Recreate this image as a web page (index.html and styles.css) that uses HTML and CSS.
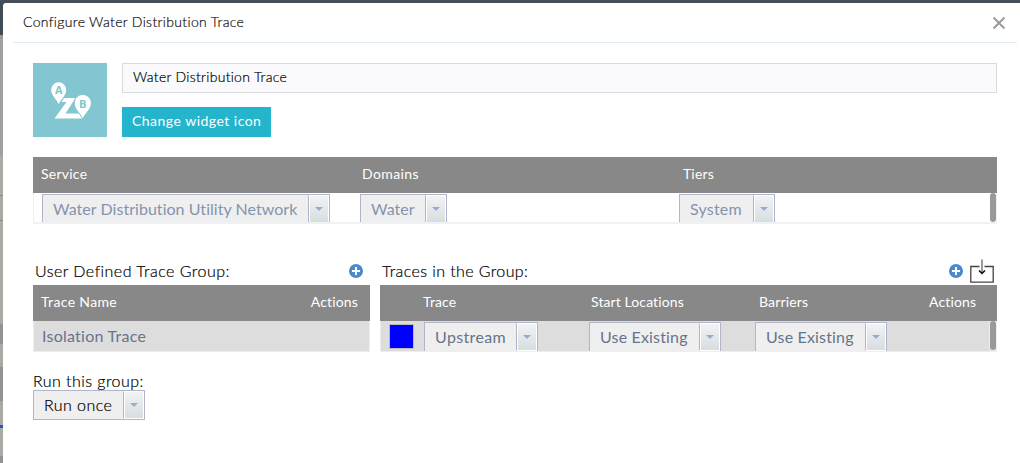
FILE: index.html
```html
<!DOCTYPE html>
<html lang="en">
<head>
<meta charset="utf-8">
<title>Configure Water Distribution Trace</title>
<link rel="stylesheet" href="styles.css">
</head>
<body>
<div class="map-strip"></div>
<main class="dialog">
  <header class="title-bar">
    <h1 class="title"><span class="t-title">Configure Water Distribution Trace</span></h1>
    <svg class="close" width="14" height="14" viewBox="0 0 14 14"><path d="M1.500 1.500 12.500 12.500M12.500 1.500 1.500 12.500" fill="none" stroke="#999" stroke-width="1.900"/></svg>
  </header>
  <div class="content">
    <section class="identity">
      <div class="widget-icon">
        <svg width="74" height="74" viewBox="0 0 74 74">
          <path d="M31 35H42.500L32.500 50.500H46L50 55.500H21.500L33.500 39H28.500Z" fill="#fff"/>
          <path d="M25.700 41C23 35.500 18.200 32.500 18.200 26.700A7.500 7.500 0 0 1 33.200 26.700C33.200 32.500 28.400 35.500 25.700 41Z" fill="#fff"/>
          <path d="M49.800 56.300C47 49.500 41.200 46.500 41.200 40A8.600 8.600 0 0 1 58.400 40C58.400 46.500 52.600 49.500 49.800 56.300Z" fill="#fff" stroke="#81c6d0" stroke-width="1"/>
          <text x="25.700" y="31" class="pin-letter">A</text>
          <text x="49.800" y="44.500" class="pin-letter">B</text>
        </svg>
      </div>
      <div class="identity-fields">
        <div class="name-input"><span class="t-name">Water Distribution Trace</span></div>
        <div class="icon-button"><span class="t-button">Change widget icon</span></div>
      </div>
    </section>

    <section class="grid network">
      <div class="grid-head network-cols"><span class="t-service">Service</span><span class="t-domains">Domains</span><span class="t-tiers">Tiers</span></div>
      <div class="grid-body network-cols">
        <div class="cell first"><div class="select w-network"><span class="value"><span class="t-network">Water Distribution Utility Network</span></span><i class="arrow"></i></div></div>
        <div class="cell"><div class="select w-water"><span class="value"><span class="t-water">Water</span></span><i class="arrow"></i></div></div>
        <div class="cell"><div class="select w-system"><span class="value"><span class="t-system">System</span></span><i class="arrow"></i></div></div>
        <div class="thumb"></div>
      </div>
    </section>

    <div class="groups">
      <section class="group">
        <div class="group-label"><span class="t-udg">User Defined Trace Group:</span>
          <svg class="add" width="14" height="14" viewBox="0 0 14 14"><circle cx="7" cy="7" r="7" fill="#4b8acb"/><path d="M7 3V11M3 7H11" stroke="#fff" stroke-width="2"/></svg>
        </div>
        <div class="grid-head name-head"><span class="t-tracename">Trace Name</span><span class="t-actions">Actions</span></div>
        <div class="grid-body shaded name-row"><span class="t-isolation">Isolation Trace</span></div>
      </section>
      <section class="group">
        <div class="group-label traces-label"><span class="t-tig">Traces in the Group:</span>
          <svg class="add" width="14" height="14" viewBox="0 0 14 14"><circle cx="7" cy="7" r="7" fill="#4b8acb"/><path d="M7 3V11M3 7H11" stroke="#fff" stroke-width="2"/></svg>
          <svg class="import" width="24" height="24" viewBox="0 0 24 24" fill="none" stroke="#444" stroke-width="1.300"><path d="M9.500 7.500H.8V23.200H23.200V7.500H14.500"/><path d="M12 .5V14" stroke="#666"/><path d="M9 11.500 12 14.300 15 11.500" stroke="#111" stroke-width="1.600"/></svg>
        </div>
        <div class="grid-head trace-cols"><span></span><span class="t-trace">Trace</span><span class="t-start">Start Locations</span><span class="t-barriers">Barriers</span><span class="t-actions">Actions</span></div>
        <div class="grid-body shaded trace-cols">
          <div class="swatch"></div>
          <div class="select w-up"><span class="value"><span class="t-up">Upstream</span></span><i class="arrow"></i></div>
          <div class="select w-use"><span class="value"><span class="t-use">Use Existing</span></span><i class="arrow"></i></div>
          <div class="select w-use"><span class="value"><span class="t-use">Use Existing</span></span><i class="arrow"></i></div>
          <div class="thumb"></div>
        </div>
      </section>
    </div>

    <section class="run">
      <div class="run-label"><span class="t-run">Run this group:</span></div>
      <div class="select w-run"><span class="value"><span class="t-once">Run once</span></span><i class="arrow"></i></div>
    </section>
  </div>
</main>
</body>
</html>
```
FILE: styles.css
```css
* { box-sizing: border-box; }
body {
  margin: 0;
  width: 1020px;
  height: 463px;
  overflow: hidden;
  display: flex;
  padding-top: 3px;
  background: #454d58;
  font-family: Lato, "Liberation Sans", sans-serif;
  font-size: 16px;
  font-variant-ligatures: none;
  color: #000;
}
.map-strip {
  width: 3px;
  flex: none;
  background: linear-gradient(#3f4b55 0 32px, #999 32px 36px, #a0a0a0 36px 153px, #aaa9a4 153px 192px, #8e8580 192px 193px, #aaa9a4 193px 217px, #8e8580 217px 218px, #aaa9a4 218px 321px, #929292 321px 341px, #aaa9a4 341px 364px, #929292 364px 398px, #aaa9a4 398px 422px, #2459b8 422px 425px, #aaa9a4 425px 453px, #929292 453px);
}
.dialog {
  flex: 1;
  background: #fff;
  border-top-left-radius: 3px;
}
.title-bar {
  display: flex;
  justify-content: space-between;
  align-items: center;
  height: 40px;
  margin: 0 3px 0 10px;
  padding: 0 11px 0 10px;
  border-bottom: 1px solid #e0ebf3;
}
.title { margin: 0; padding-bottom: 2px; font-size: 14px; font-weight: 300; color: #111; }
.close { display: block; }
.content { padding: 20px 23px 0 30px; }
.identity { display: flex; gap: 15px; }
.widget-icon { width: 74px; height: 74px; background: #81c6d0; }
.widget-icon svg { display: block; }
.pin-letter { font: 700 11px "Open Sans", sans-serif; fill: #81c6d0; text-anchor: middle; }
.identity-fields { flex: 1; display: flex; flex-direction: column; align-items: flex-start; gap: 14px; }
.name-input {
  width: 100%; height: 30px; padding-left: 10px;
  line-height: 26px; font-size: 14px; font-weight: 300;
  border: 1px solid #d9dae0; background: #fafafc;
}
.icon-button {
  width: 149px; height: 30px; padding-left: 10px;
  line-height: 27px; font-size: 14px;
  color: #fff; background: #24b5cc;
}
.network { margin-top: 20px; }
.grid-head {
  height: 36px; line-height: 33px;
  font-size: 14px;
  color: #fff; background: #888;
}
.grid-body {
  position: relative;
  height: 31px; padding-top: 1px;
  overflow: hidden;
  border: 1px solid #eef2f6; border-top: 0; border-bottom-width: 2px;
}
.network-cols { display: grid; grid-template-columns: 321px 321px 1fr; }
.grid-head.network-cols { padding-left: 8px; }
.cell { padding-left: 5px; }
.cell.first { padding-left: 8px; }
.cell:nth-child(3) { padding-left: 3px; }
.select {
  display: flex; height: 30px;
  border: 1px solid #b1b5c9;
  background: #efefef;
}
.value { flex: 1; padding-left: 10px; line-height: 28px; white-space: nowrap; }
.network .value { color: #8494ad; }
.arrow {
  width: 21px;
  display: flex; justify-content: center; align-items: center;
  border: 1px solid #fff; border-left: 1px solid #b1b5c9;
  background: linear-gradient(#f1f3f4, #d8dde0);
  box-shadow: inset 1px 0 #fff;
}
.arrow::before {
  content: "";
  border: 4px solid transparent; border-top-color: #98acd0; border-bottom: 0;
}
.w-network { width: 288px; }
.w-water { width: 87px; }
.w-system { width: 96px; }
.w-up { width: 114px; }
.w-use { width: 132px; }
.w-run { width: 112px; }
.thumb {
  position: absolute; right: 0; top: 0;
  width: 6px; height: 29px;
  border-radius: 3px; background: #999;
}
.groups { display: grid; grid-template-columns: 337px 617px; gap: 10px; margin-top: 34px; }
.group-label { display: flex; align-items: center; height: 27px; padding: 0 7px 0 2px; font-weight: 300; }
.group-label span { margin-top: -3px; }
.add { margin-left: auto; margin-top: -1px; }
.traces-label { padding-right: 3px; }
.import { margin-left: 7px; margin-top: -1px; }
.name-head { display: flex; justify-content: space-between; padding: 0 12px 0 8px; }
.shaded { background: #ddd; border-color: #eee; border-bottom-width: 1px; color: #66748c; }
.name-row { padding: 0 0 0 8px; line-height: 29px; }
.trace-cols { display: grid; grid-template-columns: 43px 165px 166px 1fr auto; }
.grid-head.trace-cols { grid-template-columns: 43px 168px 168px 1fr 48px; padding-right: 20px; }
.swatch { width: 25px; height: 25px; margin: 2px 0 0 8px; background: #00f; border: 1px solid #bbb; }
.shaded .thumb { height: 29px; box-shadow: 0 0 0 1px #eee; }
.run { margin-top: 18px; font-weight: 300; }
.run-label { height: 20px; line-height: 21px; }
.title, .name-input, .group-label span, .run { -webkit-text-stroke: .2px; }

/* Tracking per label */
[class^="t-"] { white-space: nowrap; }
.t-title { letter-spacing: .33px; }
.t-name { letter-spacing: .29px; }
.t-button { letter-spacing: .48px; }
.t-service { letter-spacing: .25px; }
.t-domains { letter-spacing: .4px; }
.t-tiers, .t-trace, .t-barriers { letter-spacing: .15px; }
.t-network { letter-spacing: .04px; }
.t-system { letter-spacing: .2px; }
.t-udg { letter-spacing: .47px; }
.t-tig { letter-spacing: .4px; }
.t-tracename { letter-spacing: .35px; }
.t-actions { letter-spacing: .15px; }
.t-isolation { letter-spacing: .25px; }
.t-start { letter-spacing: .1px; }
.t-up { letter-spacing: .35px; }
.t-use { letter-spacing: .17px; }
.t-run, .t-once { letter-spacing: .45px; }
```
